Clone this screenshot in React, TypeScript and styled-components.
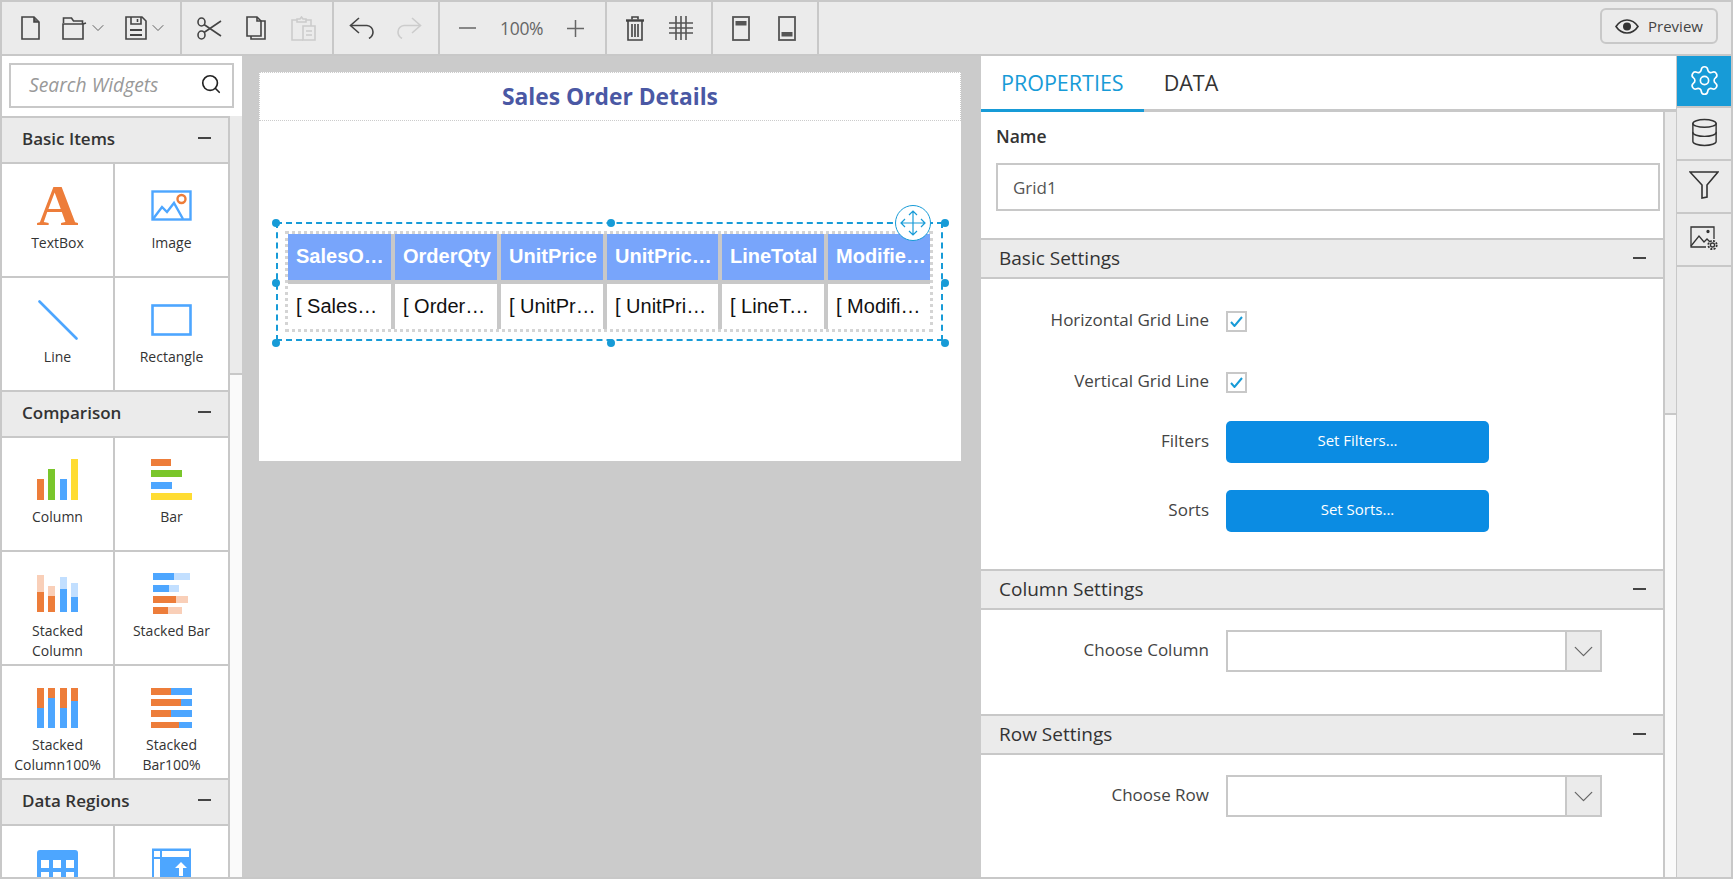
import React from "react";
import styled, { createGlobalStyle } from "styled-components";
import { Search, Settings, Database, ChevronDown } from "lucide-react";

const line = "#c8c8c8";
const panel = "#ebebeb";
const blue = "#179bd7";
const orange = "#ed7d3a";
const sky = "#4da6ff";
const green = "#7ac62b";
const yellow = "#ffdc32";
const paleOrange = "#f9cfb8";
const paleSky = "#c2dfff";

const GlobalStyle = createGlobalStyle`
  html, body {
    margin: 0;
    padding: 0;
    background: #fff;
    font-family: "Open Sans", "Noto Sans", sans-serif;
    color: #333;
  }
  * { box-sizing: border-box; }
`;

const Shell = styled.div`
  width: 1733px;
  height: 879px;
  display: flex;
  flex-direction: column;
  border: 2px solid ${line};
  overflow: hidden;
`;

const Toolbar = styled.div`
  height: 54px;
  flex: none;
  display: flex;
  align-items: stretch;
  justify-content: space-between;
  background: ${panel};
  border-bottom: 2px solid ${line};
`;

const ToolGroups = styled.div`
  display: flex;
`;

const ToolGroup = styled.div<{ $w: number; $pad: number; $gap: number }>`
  width: ${(p) => p.$w}px;
  padding-left: ${(p) => p.$pad}px;
  display: flex;
  align-items: center;
  gap: ${(p) => p.$gap}px;
  border-right: 2px solid ${line};
`;

const ToolPair = styled.span`
  width: 41px;
  display: flex;
  align-items: center;
  gap: 1px;
`;

const ZoomText = styled.span`
  font-size: 17.5px;
  color: #666;
  letter-spacing: -0.3px;
  width: 43px;
  text-align: center;
  white-space: nowrap;
`;

const PreviewButton = styled.button`
  width: 118px;
  height: 36px;
  margin: 6px 13px 0 0;
  display: flex;
  align-items: center;
  justify-content: center;
  gap: 9px;
  background: ${panel};
  border: 2px solid ${line};
  border-radius: 6px;
  font: 15px "Open Sans", sans-serif;
  color: #444;
`;

const Main = styled.div`
  flex: 1;
  min-height: 0;
  display: flex;
`;

const LeftPanel = styled.div`
  width: 240px;
  flex: none;
  display: flex;
  flex-direction: column;
  background: #fff;
`;

const SearchArea = styled.div`
  height: 60px;
  flex: none;
  padding: 7px 8px 0 7px;
`;

const SearchBox = styled.div`
  height: 45px;
  display: flex;
  align-items: center;
  justify-content: space-between;
  padding: 0 10px 3px 18px;
  border: 2px solid ${line};
  font-size: 19.3px;
  font-style: italic;
  color: #999;
`;

const WidgetColumn = styled.div`
  flex: 1;
  min-height: 0;
  display: flex;
`;

const Widgets = styled.div`
  width: 226px;
  flex: none;
  overflow: hidden;
`;

const GroupHeader = styled.div`
  height: 48px;
  display: flex;
  align-items: center;
  justify-content: space-between;
  padding: 0 17px 4px 20px;
  background: ${panel};
  border-top: 2px solid ${line};
  border-bottom: 2px solid ${line};
  font-size: 17px;
  font-weight: 600;
  color: #333;
`;

const Minus = styled.span`
  width: 13px;
  height: 2px;
  background: #444;
`;

const WidgetGrid = styled.div`
  display: grid;
  grid-template-columns: 111px 113px;
  grid-auto-rows: 112px;
  column-gap: 2px;
  row-gap: 2px;
  background: ${line};
`;

const WidgetCell = styled.div`
  background: #fff;
  padding: 21px 12px 0;
  display: flex;
  flex-direction: column;
  align-items: center;
  font-size: 14px;
  line-height: 20px;
  text-align: center;
  color: #333;
`;

const WidgetIconBox = styled.div`
  width: 41px;
  height: 41px;
  flex: none;
  margin-bottom: 7px;
  display: flex;
  align-items: center;
  justify-content: center;
`;

const LetterIcon = styled.span`
  font: bold 58px/41px "Liberation Serif", serif;
  color: ${orange};
`;

const Track = styled.div<{ $thumb: number; $w: number }>`
  width: ${(p) => p.$w}px;
  flex: none;
  background: #fafafa;
  border-left: 2px solid ${line};

  &::before {
    content: "";
    display: block;
    height: ${(p) => p.$thumb}px;
    background: ${panel};
    border-bottom: 2px solid ${line};
  }
`;

const CanvasArea = styled.div`
  width: 739px;
  flex: none;
  padding: 16px 0 0 17px;
  background: #cbcbcb;
`;

const Page = styled.div`
  width: 702px;
  height: 389px;
  background: #fff;
`;

const PageHeader = styled.div`
  height: 49px;
  padding-top: 6px;
  text-align: center;
  border: 1px dotted #ccc;
  font-size: 22.8px;
  font-weight: 700;
  line-height: 36px;
  color: #4a58a4;
`;

const Selection = styled.div`
  position: relative;
  width: 667px;
  height: 119px;
  margin: 101px 0 0 17px;
  padding: 7px 0 0 7px;
  border: 2px dashed ${blue};
`;

const Handle = styled.span<{ $x: number; $y: number }>`
  position: absolute;
  left: calc(${(p) => p.$x} * 6.69px - 6px);
  top: calc(${(p) => p.$y} * 1.2px - 5.3px);
  width: 8px;
  height: 8px;
  border-radius: 50%;
  background: ${blue};
`;

const MoveHandle = styled.span`
  position: absolute;
  right: 10px;
  top: -19px;
  width: 36px;
  height: 36px;
  display: flex;
  align-items: center;
  justify-content: center;
  border-radius: 50%;
  background: #fff;
  border: 1.5px solid ${blue};
`;

const ReportTable = styled.div`
  display: grid;
  grid-template-columns: 103px 102px 102px 111px 102px 102px;
  grid-template-rows: 46px 45px;
  gap: 4px;
  width: fit-content;
  background: ${line};
  background-clip: padding-box;
  border: 3px dotted #d4d4d4;
`;

const HeadCell = styled.div`
  padding: 0 3px 0 8px;
  background: #78a5fb;
  color: #fff;
  font: bold 20px/44px "Liberation Sans", Arial, sans-serif;
  white-space: nowrap;
  overflow: hidden;
  text-overflow: ellipsis;
`;

const BodyCell = styled(HeadCell)`
  background: #fff;
  color: #111;
  font-weight: 400;
  padding-right: 7px;
  line-height: 44px;
`;

const RightPanel = styled.div`
  width: 695px;
  flex: none;
  display: flex;
  flex-direction: column;
  background: #fff;
`;

const Tabs = styled.div`
  height: 56px;
  flex: none;
  display: flex;
  border-bottom: 3px solid ${line};
`;

const Tab = styled.div<{ $active?: boolean }>`
  height: 56px;
  padding: 0 20px;
  display: flex;
  align-items: center;
  font-size: 21.5px;
  font-weight: 500;
  color: ${(p) => (p.$active ? blue : "#333")};
  border-bottom: 3px solid ${(p) => (p.$active ? blue : "transparent")};
`;

const PropsRow = styled.div`
  flex: 1;
  min-height: 0;
  display: flex;
`;

const PropsBody = styled.div`
  width: 682px;
  flex: none;
`;

const NameBlock = styled.div`
  height: 126px;
  padding: 12px 3px 0 15px;
`;

const NameLabel = styled.div`
  height: 24px;
  margin-bottom: 15px;
  font-size: 17.5px;
  font-weight: 600;
  line-height: 24px;
`;

const NameInput = styled.div`
  height: 48px;
  padding-left: 15px;
  display: flex;
  align-items: center;
  border: 2px solid ${line};
  font-size: 17px;
  color: #555;
`;

const SectionHeader = styled.div`
  height: 41px;
  display: flex;
  align-items: center;
  justify-content: space-between;
  padding: 0 17px 2px 18px;
  background: ${panel};
  border-top: 2px solid ${line};
  border-bottom: 2px solid ${line};
  font-size: 19px;
  font-weight: 500;
  color: #333;
`;

const SectionBody = styled.div<{ $h: number }>`
  height: ${(p) => p.$h}px;
  padding-top: 20px;
`;

const FieldRow = styled.div<{ $h: number; $after?: number; $before?: number }>`
  height: ${(p) => p.$h}px;
  margin-top: ${(p) => p.$before ?? 0}px;
  margin-bottom: ${(p) => p.$after ?? 0}px;
  display: grid;
  grid-template-columns: 228px auto;
  column-gap: 17px;
  justify-content: start;
  align-items: center;
`;

const FieldLabel = styled.div`
  text-align: right;
  font-size: 17px;
  padding-bottom: 3px;
  color: #444;
  white-space: nowrap;
`;

const CheckBox = styled.span`
  width: 21px;
  height: 21px;
  display: flex;
  align-items: center;
  justify-content: center;
  border: 2px solid ${line};
`;

const BlueButton = styled.button`
  width: 263px;
  height: 42px;
  padding-bottom: 5px;
  background: #0b8ce3;
  border: none;
  border-radius: 5px;
  color: #fff;
  font: 15px "Open Sans", sans-serif;
`;

const SelectBox = styled.div`
  width: 376px;
  height: 42px;
  display: flex;
  border: 2px solid ${line};
`;

const SelectField = styled.div`
  flex: 1;
`;

const SelectArrow = styled.div`
  width: 35px;
  display: flex;
  align-items: center;
  justify-content: center;
  background: ${panel};
  border-left: 2px solid ${line};
  color: #666;
`;

const SideBar = styled.div`
  flex: 1;
  min-width: 0;
  background: ${panel};
  border-left: 1px solid ${line};
`;

const SideItem = styled.div<{ $active?: boolean }>`
  height: 53px;
  display: flex;
  align-items: center;
  justify-content: center;
  padding-bottom: 3px;
  background: ${(p) => (p.$active ? blue : "transparent")};
  color: ${(p) => (p.$active ? "#fff" : "#333")};
  border-bottom: 2px solid ${line};

  &:first-child {
    height: 52px;
    padding-bottom: 1px;
  }
`;

const stroke = { fill: "none", stroke: "#444", strokeWidth: 1.6 } as const;
const disabled = { fill: "none", stroke: "#ccc", strokeWidth: 1.6 } as const;

const FileIcon = () => (
  <svg width="19" height="24" viewBox="0 0 19 24" {...stroke}>
    <path d="M1 1h12l5 5v17H1z" />
    <path d="M13 1v5h5" fill="#666" />
  </svg>
);
const FolderIcon = () => (
  <svg width="25" height="23" viewBox="0 0 25 23" {...stroke} style={{ flex: "none" }}>
    <path d="M1.500 6V1h8l2 3h9v3" />
    <path d="M1 7h20v15H1z" />
    <path d="M21 7l3-1" />
  </svg>
);
const SaveIcon = () => (
  <svg width="22" height="24" viewBox="0 0 22 24" {...stroke} style={{ flex: "none" }}>
    <path d="M1 1h16l4 4v18H1z" />
    <path d="M6 1v7h10V1" />
    <path d="M12.500 3v3" />
    <path d="M5 14h12M5 19h12" strokeWidth="2" />
  </svg>
);
const Caret = () => <ChevronDown size={20} strokeWidth={1.1} color="#555" style={{ flex: "none" }} />;
const ScissorsIcon = () => (
  <svg width="25" height="23" viewBox="0 0 25 23" {...stroke}>
    <ellipse cx="4.500" cy="5" rx="3.500" ry="4" />
    <ellipse cx="4.500" cy="18" rx="3.500" ry="4" />
    <path d="M7 7.500L24 19M7 15.500L24 4" />
  </svg>
);
const CopyIcon = () => (
  <svg width="20" height="24" viewBox="0 0 20 24" {...stroke}>
    <path d="M1 1h10l4 4v15H1z" />
    <path d="M11 1v4h4" />
    <path d="M15 5h4v18H5v-3" />
  </svg>
);
const PasteIcon = () => (
  <svg width="26" height="25" viewBox="0 0 26 25" {...disabled}>
    <path d="M7 4H2v20h11" />
    <path d="M16 4h5v6" />
    <path d="M7 6V3h3l1.500-2 1.500 2h3v3z" />
    <path d="M13 10h12v14H13zM16 15h6M16 19h6" />
  </svg>
);
const UndoIcon = ({ off }: { off?: boolean }) => (
  <svg
    width="26"
    height="22"
    viewBox="0 0 26 22"
    {...(off ? disabled : stroke)}
    style={off ? { transform: "scaleX(-1)" } : undefined}
  >
    <path d="M10 1L1.500 8.500 10 16" />
    <path d="M2 8.500h16a6.500 6.500 0 0 1 6 6.500c0 3-1.500 5-4 6.500" />
  </svg>
);
const MinusIcon = () => (
  <svg width="17" height="2" viewBox="0 0 17 2">
    <path d="M0 1h17" stroke="#666" strokeWidth="1.500" />
  </svg>
);
const PlusIcon = () => (
  <svg width="17" height="17" viewBox="0 0 17 17">
    <path d="M0 8.500h17M8.500 0v17" stroke="#666" strokeWidth="1.500" />
  </svg>
);
const TrashIcon = () => (
  <svg width="18" height="25" viewBox="0 0 18 25" {...stroke}>
    <path d="M0 4.500h18" strokeWidth="2.400" />
    <path d="M6 3.500V1h6v2.500" />
    <path d="M2 5v19h14V5M6 8v13M9 8v13M12 8v13" />
  </svg>
);
const GridIcon = () => (
  <svg width="24" height="24" viewBox="0 0 24 24" fill="none" stroke="#555" strokeWidth="1.600">
    <path d="M7 0v24M12 0v24M17 0v24M0 7h24M0 12h24M0 17h24" />
  </svg>
);
const PageBandIcon = ({ footer }: { footer?: boolean }) => (
  <svg width="18" height="25" viewBox="0 0 18 25">
    <rect x="1" y="1" width="16" height="23" fill="none" stroke="#555" strokeWidth="1.800" />
    <rect x="3.500" y={footer ? 16 : 5} width="11" height="4.500" fill="#555" />
  </svg>
);
const EyeIcon = () => (
  <svg width="24" height="15" viewBox="0 0 24 15">
    <path d="M1 7.500C4 3 8 1 12 1s8 2 11 6.500C20 12 16 14 12 14S4 12 1 7.500z" fill="none" stroke="#333" strokeWidth="1.600" />
    <circle cx="12" cy="7.500" r="4" fill="#333" />
  </svg>
);
const FunnelIcon = () => (
  <svg width="30" height="28" viewBox="0 0 30 28" fill="none" stroke="#333" strokeWidth="1.600">
    <path d="M1 1h28L18 14v12l-5 1V14z" />
  </svg>
);
const ImageGearIcon = () => (
  <svg width="29" height="25" viewBox="0 0 29 25" fill="none" stroke="#333" strokeWidth="1.300">
    <path d="M24 13V1H1v20h15" />
    <path d="M1 20l8-10 5 6 3-3 3 3" />
    <circle cx="18" cy="5.500" r="1" fill="#333" />
    <circle cx="22.500" cy="19" r="2" />
    <circle cx="22.500" cy="19" r="4.200" strokeDasharray="2 1.300" strokeWidth="1.800" />
  </svg>
);
const MoveIcon = () => (
  <svg width="26" height="26" viewBox="0 0 26 26" fill="none" stroke={blue} strokeWidth="1.200">
    <path d="M13 1v24M1 13h24M9 5l4-4 4 4M9 21l4 4 4-4M5 9l-4 4 4 4M21 9l4 4-4 4" />
  </svg>
);
const TickIcon = () => (
  <svg width="13" height="11" viewBox="0 0 13 11" fill="none" stroke={blue} strokeWidth="2">
    <path d="M1 6l3.500 4L12 1" />
  </svg>
);

const ImageWidget = () => (
  <svg width="41" height="31" viewBox="0 0 41 31" fill="none" stroke={sky} strokeWidth="2.400">
    <rect x="1.500" y="1.500" width="38" height="28" />
    <path d="M2 29l9-12 5 5 7-9 9 16" />
    <circle cx="30.500" cy="9" r="4" stroke={orange} />
  </svg>
);
const LineWidget = () => (
  <svg width="40" height="40" viewBox="0 0 40 40">
    <path d="M1.500 1.500l37 37" stroke={sky} strokeWidth="2.600" strokeLinecap="round" />
  </svg>
);
const RectWidget = () => (
  <svg width="41" height="32" viewBox="0 0 41 32">
    <rect x="1.500" y="1.500" width="38" height="29" fill="none" stroke={sky} strokeWidth="2.600" />
  </svg>
);

type Seg = [number, number, number, number, string];
const Bars = ({ segs }: { segs: Seg[] }) => (
  <svg width="41" height="41" viewBox="0 0 41 41">
    {segs.map(([x, y, w, h, c], i) => (
      <rect key={i} x={x} y={y} width={w} height={h} fill={c} />
    ))}
  </svg>
);

const colX = [0, 11, 23, 34];
const rowY = [0, 11, 23, 34];

const columnSegs: Seg[] = [
  [colX[0], 20, 7, 21, orange],
  [colX[1], 10, 7, 31, green],
  [colX[2], 20, 7, 21, sky],
  [colX[3], 0, 7, 41, yellow],
];
const barSegs: Seg[] = [
  [0, rowY[0], 20, 7, orange],
  [0, rowY[1], 31, 7, green],
  [0, rowY[2], 21, 7, sky],
  [0, rowY[3], 41, 7, yellow],
];
const stackedColumnSegs: Seg[] = [
  [colX[0], 2, 7, 17, paleOrange],
  [colX[0], 19, 7, 20, orange],
  [colX[1], 13, 7, 10, paleOrange],
  [colX[1], 23, 7, 16, orange],
  [colX[2], 4, 7, 12, paleSky],
  [colX[2], 16, 7, 23, sky],
  [colX[3], 10, 7, 14, paleSky],
  [colX[3], 24, 7, 15, sky],
];
const stackedBarSegs: Seg[] = [
  [2, 0, 21, 7, sky],
  [23, 0, 16, 7, paleSky],
  [2, 12, 16, 7, sky],
  [18, 12, 10, 7, paleSky],
  [2, 23, 23, 7, orange],
  [25, 23, 12, 7, paleOrange],
  [2, 34, 15, 7, orange],
  [17, 34, 14, 7, paleOrange],
];
const fullColumnSegs: Seg[] = [
  [colX[0], 1, 7, 20, orange],
  [colX[0], 21, 7, 20, sky],
  [colX[1], 1, 7, 10, orange],
  [colX[1], 11, 7, 30, sky],
  [colX[2], 1, 7, 20, orange],
  [colX[2], 21, 7, 20, sky],
  [colX[3], 1, 7, 13, orange],
  [colX[3], 14, 7, 27, sky],
];
const fullBarSegs: Seg[] = [
  [0, 1, 20, 7, orange],
  [20, 1, 21, 7, sky],
  [0, 12, 30, 7, orange],
  [30, 12, 11, 7, sky],
  [0, 23, 20, 7, orange],
  [20, 23, 21, 7, sky],
  [0, 35, 28, 6, orange],
  [28, 35, 13, 6, sky],
];

const TableWidget = () => (
  <svg width="41" height="41" viewBox="0 0 41 41">
    <rect x="0" y="3" width="41" height="38" rx="3" fill={sky} />
    <path d="M4 13h8v8H4zM16 13h8v8h-8zM29 13h8v8h-8zM4 25h8v8H4zM16 25h8v8h-8zM29 25h8v8h-8z" fill="#fff" />
  </svg>
);
const MatrixWidget = () => (
  <svg width="41" height="41" viewBox="0 0 41 41">
    <rect x="1" y="1.500" width="39" height="39" fill={sky} />
    <path d="M3 4h6v6H3zM11 4h27v6H11zM3 12h6v26H3z" fill="#fff" />
    <path d="M30 15l6 6h-4v8h-4v-8h-4z" fill="#fff" />
  </svg>
);

const tableColumns = [
  ["SalesOrderID", "[ SalesOrderID ]"],
  ["OrderQty", "[ OrderQty ]"],
  ["UnitPrice", "[ UnitPrice ]"],
  ["UnitPriceDiscount", "[ UnitPriceDiscount ]"],
  ["LineTotal", "[ LineTotal ]"],
  ["ModifiedDate", "[ ModifiedDate ]"],
];

const handles = [
  [0, 0],
  [50, 0],
  [100, 0],
  [0, 50],
  [100, 50],
  [0, 100],
  [50, 100],
  [100, 100],
];

export default function App() {
  return (
    <Shell>
      <GlobalStyle />
      <Toolbar>
        <ToolGroups>
          <ToolGroup $w={180} $pad={19} $gap={22}>
            <FileIcon />
            <ToolPair>
              <FolderIcon />
              <Caret />
            </ToolPair>
            <ToolPair>
              <SaveIcon />
              <Caret />
            </ToolPair>
          </ToolGroup>
          <ToolGroup $w={152} $pad={15} $gap={24}>
            <ScissorsIcon />
            <CopyIcon />
            <PasteIcon />
          </ToolGroup>
          <ToolGroup $w={106} $pad={15} $gap={21}>
            <UndoIcon />
            <UndoIcon off />
          </ToolGroup>
          <ToolGroup $w={167} $pad={19} $gap={24}>
            <MinusIcon />
            <ZoomText>100%</ZoomText>
            <PlusIcon />
          </ToolGroup>
          <ToolGroup $w={106} $pad={19} $gap={25}>
            <TrashIcon />
            <GridIcon />
          </ToolGroup>
          <ToolGroup $w={106} $pad={19} $gap={28}>
            <PageBandIcon />
            <PageBandIcon footer />
          </ToolGroup>
        </ToolGroups>
        <PreviewButton>
          <EyeIcon />
          Preview
        </PreviewButton>
      </Toolbar>
      <Main>
        <LeftPanel>
          <SearchArea>
            <SearchBox>
              Search Widgets
              <Search size={22} strokeWidth={1.8} color="#222" />
            </SearchBox>
          </SearchArea>
          <WidgetColumn>
            <Widgets>
              <GroupHeader>
                Basic Items
                <Minus />
              </GroupHeader>
              <WidgetGrid>
                <WidgetCell>
                  <WidgetIconBox>
                    <LetterIcon>A</LetterIcon>
                  </WidgetIconBox>
                  TextBox
                </WidgetCell>
                <WidgetCell>
                  <WidgetIconBox>
                    <ImageWidget />
                  </WidgetIconBox>
                  Image
                </WidgetCell>
                <WidgetCell>
                  <WidgetIconBox>
                    <LineWidget />
                  </WidgetIconBox>
                  Line
                </WidgetCell>
                <WidgetCell>
                  <WidgetIconBox>
                    <RectWidget />
                  </WidgetIconBox>
                  Rectangle
                </WidgetCell>
              </WidgetGrid>
              <GroupHeader>
                Comparison
                <Minus />
              </GroupHeader>
              <WidgetGrid>
                <WidgetCell>
                  <WidgetIconBox>
                    <Bars segs={columnSegs} />
                  </WidgetIconBox>
                  Column
                </WidgetCell>
                <WidgetCell>
                  <WidgetIconBox>
                    <Bars segs={barSegs} />
                  </WidgetIconBox>
                  Bar
                </WidgetCell>
                <WidgetCell>
                  <WidgetIconBox>
                    <Bars segs={stackedColumnSegs} />
                  </WidgetIconBox>
                  Stacked Column
                </WidgetCell>
                <WidgetCell>
                  <WidgetIconBox>
                    <Bars segs={stackedBarSegs} />
                  </WidgetIconBox>
                  Stacked Bar
                </WidgetCell>
                <WidgetCell>
                  <WidgetIconBox>
                    <Bars segs={fullColumnSegs} />
                  </WidgetIconBox>
                  Stacked Column100%
                </WidgetCell>
                <WidgetCell>
                  <WidgetIconBox>
                    <Bars segs={fullBarSegs} />
                  </WidgetIconBox>
                  Stacked Bar100%
                </WidgetCell>
              </WidgetGrid>
              <GroupHeader>
                Data Regions
                <Minus />
              </GroupHeader>
              <WidgetGrid>
                <WidgetCell>
                  <WidgetIconBox>
                    <TableWidget />
                  </WidgetIconBox>
                </WidgetCell>
                <WidgetCell>
                  <WidgetIconBox>
                    <MatrixWidget />
                  </WidgetIconBox>
                </WidgetCell>
              </WidgetGrid>
            </Widgets>
            <Track $w={14} $thumb={257} />
          </WidgetColumn>
        </LeftPanel>
        <CanvasArea>
          <Page>
            <PageHeader>Sales Order Details</PageHeader>
            <Selection>
              <ReportTable>
                {tableColumns.map(([head]) => (
                  <HeadCell key={head}>{head}</HeadCell>
                ))}
                {tableColumns.map(([head, field]) => (
                  <BodyCell key={head}>{field}</BodyCell>
                ))}
              </ReportTable>
              {handles.map(([x, y]) => (
                <Handle key={`${x}-${y}`} $x={x} $y={y} />
              ))}
              <MoveHandle>
                <MoveIcon />
              </MoveHandle>
            </Selection>
          </Page>
        </CanvasArea>
        <RightPanel>
          <Tabs>
            <Tab $active>PROPERTIES</Tab>
            <Tab>DATA</Tab>
          </Tabs>
          <PropsRow>
            <PropsBody>
              <NameBlock>
                <NameLabel>Name</NameLabel>
                <NameInput>Grid1</NameInput>
              </NameBlock>
              <SectionHeader>
                Basic Settings
                <Minus />
              </SectionHeader>
              <SectionBody $h={290}>
                <FieldRow $h={21} $before={9} $after={40}>
                  <FieldLabel>Horizontal Grid Line</FieldLabel>
                  <CheckBox>
                    <TickIcon />
                  </CheckBox>
                </FieldRow>
                <FieldRow $h={21} $after={31}>
                  <FieldLabel>Vertical Grid Line</FieldLabel>
                  <CheckBox>
                    <TickIcon />
                  </CheckBox>
                </FieldRow>
                <FieldRow $h={42} $after={27}>
                  <FieldLabel>Filters</FieldLabel>
                  <BlueButton>Set Filters...</BlueButton>
                </FieldRow>
                <FieldRow $h={42}>
                  <FieldLabel>Sorts</FieldLabel>
                  <BlueButton>Set Sorts...</BlueButton>
                </FieldRow>
              </SectionBody>
              <SectionHeader>
                Column Settings
                <Minus />
              </SectionHeader>
              <SectionBody $h={104}>
                <FieldRow $h={42}>
                  <FieldLabel>Choose Column</FieldLabel>
                  <SelectBox>
                    <SelectField />
                    <SelectArrow>
                      <ChevronDown size={33} strokeWidth={0.9} />
                    </SelectArrow>
                  </SelectBox>
                </FieldRow>
              </SectionBody>
              <SectionHeader>
                Row Settings
                <Minus />
              </SectionHeader>
              <SectionBody $h={100}>
                <FieldRow $h={42}>
                  <FieldLabel>Choose Row</FieldLabel>
                  <SelectBox>
                    <SelectField />
                    <SelectArrow>
                      <ChevronDown size={33} strokeWidth={0.9} />
                    </SelectArrow>
                  </SelectBox>
                </FieldRow>
              </SectionBody>
            </PropsBody>
            <Track $w={13} $thumb={301} />
          </PropsRow>
        </RightPanel>
        <SideBar>
          <SideItem $active>
            <Settings size={33} strokeWidth={1.2} />
          </SideItem>
          <SideItem>
            <Database size={31} strokeWidth={1.1} />
          </SideItem>
          <SideItem>
            <FunnelIcon />
          </SideItem>
          <SideItem>
            <ImageGearIcon />
          </SideItem>
        </SideBar>
      </Main>
    </Shell>
  );
}
